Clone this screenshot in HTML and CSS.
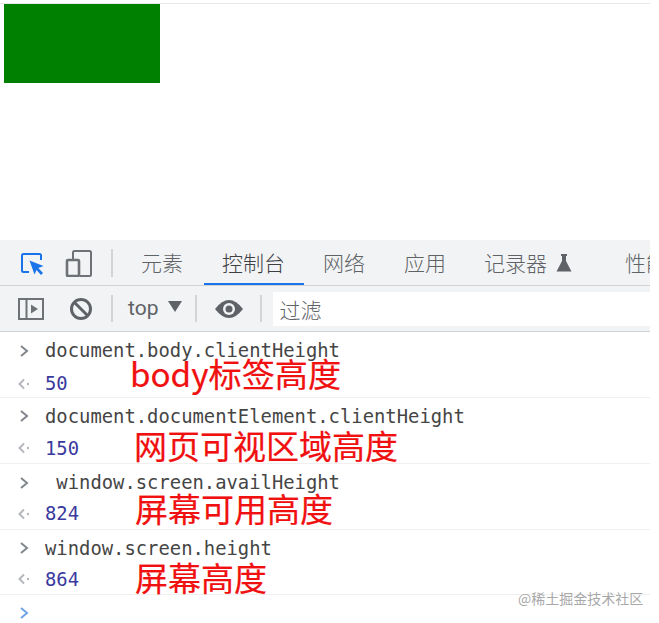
FILE: index.html
```html
<!DOCTYPE html>
<html lang="zh-CN">
<head>
<meta charset="utf-8">
<title>clientHeight</title>
<link rel="stylesheet" href="styles.css">
</head>
<body>
<div class="page">
  <section class="viewport"><div class="green-box"></div></section>
  <section class="devtools">
    <div class="tabbar">
      <svg class="icon icon-inspect" width="26" height="26" viewBox="0 0 26 26"><path d="M10 22H4.500Q3 22 3 20.500V5.500Q3 4 4.500 4H20.500Q22 4 22 5.500V10" fill="none" stroke="#1a73e8" stroke-width="2"/><path d="M10.500 10.500L24.500 16L19.300 18L24 23L22 25L17.500 20L15.500 24.500Z" fill="#1a73e8"/></svg>
      <svg class="icon icon-device" width="28" height="28" viewBox="0 0 28 28"><path d="M8 10V3.500Q8 2 9.500 2H24.500Q26 2 26 3.500V25.500Q26 27 24.500 27H15" fill="none" stroke="#6e7276" stroke-width="2"/><rect x="2" y="11" width="12" height="16" rx="1" fill="none" stroke="#6e7276" stroke-width="2.600"/></svg>
      <span class="sep sep-tall"></span>
      <span class="tab tab-first">元素</span>
      <span class="tab tab-active">控制台</span>
      <span class="tab tab-net">网络</span>
      <span class="tab">应用</span>
      <span class="tab tab-rec">记录器<svg class="flask" width="16" height="20" viewBox="0 0 16 20"><path d="M5 1H11V3H10V8L15.500 18.500H.5L6 8V3H5Z" fill="#5f6368"/></svg></span>
      <span class="tab tab-clip">性能</span>
    </div>
    <div class="filterbar">
      <svg class="icon icon-panel" width="26" height="22" viewBox="0 0 26 22"><rect x="1" y="1" width="24" height="20" fill="none" stroke="#6e7276" stroke-width="2"/><path d="M8.500 1V21" stroke="#6e7276" stroke-width="2"/><path d="M13 6.500L20 11L13 15.500Z" fill="#6e7276"/></svg>
      <svg class="icon icon-clear" width="24" height="24" viewBox="0 0 24 24"><circle cx="12" cy="12" r="9.500" fill="none" stroke="#5f6368" stroke-width="3"/><path d="M5.500 5.500L18.500 18.500" stroke="#5f6368" stroke-width="3"/></svg>
      <span class="sep"></span>
      <span class="context">top</span>
      <span class="caret"></span>
      <span class="sep"></span>
      <svg class="icon icon-eye" width="30" height="20" viewBox="0 0 30 20"><path d="M1 10Q8 1 15 1T29 10Q22 19 15 19T1 10Z" fill="#5f6368"/><circle cx="15" cy="10" r="6" fill="#f1f3f4"/><circle cx="15" cy="10" r="3.500" fill="#5f6368"/></svg>
      <span class="sep"></span>
      <div class="filter">过滤</div>
    </div>
    <div class="console">
      <div class="entry entry-loose">
        <div class="line"><svg class="arrow" width="10" height="12" viewBox="0 0 10 12"><path d="M2 1L8 6L2 11" fill="none" stroke="#80868b" stroke-width="2"/></svg><code class="code">document.body.clientHeight</code></div>
        <div class="line"><svg class="arrow back" width="12" height="12" viewBox="0 0 12 12"><path d="M6 1.500L1.500 6L6 10.500" fill="none" stroke="#b4b8bc" stroke-width="2"/><circle cx="10" cy="6" r="1.200" fill="#b4b8bc"/></svg><code class="code num">50</code></div>
        <span class="note note-body">body标签高度</span>
      </div>
      <div class="entry entry-mid">
        <div class="line"><svg class="arrow" width="10" height="12" viewBox="0 0 10 12"><path d="M2 1L8 6L2 11" fill="none" stroke="#80868b" stroke-width="2"/></svg><code class="code">document.documentElement.clientHeight</code></div>
        <div class="line"><svg class="arrow back" width="12" height="12" viewBox="0 0 12 12"><path d="M6 1.500L1.500 6L6 10.500" fill="none" stroke="#b4b8bc" stroke-width="2"/><circle cx="10" cy="6" r="1.200" fill="#b4b8bc"/></svg><code class="code num">150</code></div>
        <span class="note note-view">网页可视区域高度</span>
      </div>
      <div class="entry entry-tight">
        <div class="line"><svg class="arrow" width="10" height="12" viewBox="0 0 10 12"><path d="M2 1L8 6L2 11" fill="none" stroke="#80868b" stroke-width="2"/></svg><code class="code"> window.screen.availHeight</code></div>
        <div class="line"><svg class="arrow back" width="12" height="12" viewBox="0 0 12 12"><path d="M6 1.500L1.500 6L6 10.500" fill="none" stroke="#b4b8bc" stroke-width="2"/><circle cx="10" cy="6" r="1.200" fill="#b4b8bc"/></svg><code class="code num">824</code></div>
        <span class="note note-avail">屏幕可用高度</span>
      </div>
      <div class="entry entry-tight">
        <div class="line"><svg class="arrow" width="10" height="12" viewBox="0 0 10 12"><path d="M2 1L8 6L2 11" fill="none" stroke="#80868b" stroke-width="2"/></svg><code class="code">window.screen.height</code></div>
        <div class="line"><svg class="arrow back" width="12" height="12" viewBox="0 0 12 12"><path d="M6 1.500L1.500 6L6 10.500" fill="none" stroke="#b4b8bc" stroke-width="2"/><circle cx="10" cy="6" r="1.200" fill="#b4b8bc"/></svg><code class="code num">864</code></div>
        <span class="note note-screen">屏幕高度</span>
      </div>
      <div class="line prompt"><svg class="arrow" width="10" height="14" viewBox="0 0 10 14"><path d="M2 2L8 7L2 12" fill="none" stroke="#6ea3e8" stroke-width="2"/></svg></div>
      <span class="watermark">@稀土掘金技术社区</span>
    </div>
  </section>
</div>
</body>
</html>
```
FILE: styles.css
```css
* { box-sizing: border-box; }
html, body { margin: 0; background: #fff; }
body { font-family: "Noto Sans CJK SC", "Noto Sans", sans-serif; overflow: hidden; }
.page { width: 650px; height: 623px; }

.viewport { margin-top: 3px; height: 237px; border-top: 1px solid #e8e8e8; }
.green-box { width: 156px; height: 79px; margin-left: 4px; background: #008000; }

.devtools { color: #5f6368; }
.tabbar {
  height: 46px;
  background: #f1f3f4;
  border-bottom: 1px solid #d0d3d6;
  display: flex;
  align-items: center;
  overflow: hidden;
}
.icon { flex: none; display: block; }
.icon-inspect { margin-left: 19px; margin-top: 1px; }
.icon-device { margin-left: 20px; }
.sep { flex: none; width: 2px; height: 26px; background: #d2d4d7; }
.sep-tall { margin-left: 18px; height: 28px; }
.tab {
  flex: none;
  height: 45px;
  line-height: 45px;
  font-size: 21px;
  font-weight: 300;
  color: #5f6368;
  padding: 0 19px;
  white-space: nowrap;
}
.tab-first { margin-left: 10px; padding: 0 21px 0 18px; }
.tab-active {
  color: #3c4043;
  border-bottom: 2px solid #1a73e8;
  padding: 0 19px 0 18px;
  width: 100px;
}
.tab-net { padding-right: 20px; }
.tab-rec { display: flex; align-items: center; padding-left: 19px; padding-right: 0; }
.flask { margin-left: 9px; }
.tab-clip { padding-left: 53px; padding-right: 0; width: 100px; overflow: hidden; }

.filterbar {
  height: 46px;
  background: #f1f3f4;
  border-bottom: 1px solid #d0d3d6;
  display: flex;
  align-items: center;
}
.icon-panel { margin-left: 18px; }
.icon-clear { margin-left: 25px; }
.filterbar .sep { height: 27px; }
.icon-clear + .sep { margin-left: 18px; }
.context { margin-left: 15px; font-family: "Roboto", sans-serif; font-size: 21px; color: #5f6368; line-height: 1; }
.caret {
  width: 0; height: 0;
  margin-left: 10px; margin-right: 13px; margin-top: -5px;
  border-left: 7px solid transparent;
  border-right: 7px solid transparent;
  border-top: 11px solid #5f6368;
}
.icon-eye { margin-left: 17px; }
.icon-eye + .sep { margin-left: 16px; }
.filter {
  margin-left: 11px;
  flex: 1;
  height: 34px;
  background: #fff;
  font-size: 21px;
  font-weight: 300;
  line-height: 35px;
  padding-left: 6px;
  color: #5f6368;
}

.console { position: relative; }
.entry { position: relative; border-bottom: 1px solid #f0f0f0; height: 66px; padding-top: 2px; }
.entry-tight { height: 65.500px; padding-top: 3px; }
.line { height: 33px; display: flex; align-items: center; padding-left: 19px; }
.entry-mid .line { height: 32px; }
.entry-tight .line { height: 31px; }
.arrow { flex: none; display: block; }
.back { margin-left: -1px; }
.code {
  margin-left: 16px;
  font-family: "DejaVu Sans Mono", monospace;
  font-size: 18.850px;
  color: #454545;
  white-space: pre;
  line-height: 31px;
}
.back + .code { margin-left: 15px; }
.num { color: #3a3a9e; }
.note {
  position: absolute;
  color: #f01010;
  font-size: 33px;
  line-height: 1;
  white-space: nowrap;
  font-family: "Noto Sans CJK SC", sans-serif;
  -webkit-text-stroke: 0.2px #f01010;
}
.note-body { left: 130px; top: 24px; font-size: 33.200px; }
.note-view { left: 134px; top: 31px; }
.note-avail { left: 135px; top: 28px; }
.note-screen { left: 135px; top: 31px; }
.prompt { height: 36px; }
.watermark {
  position: absolute;
  left: 518px;
  top: 258px;
  font-size: 14px;
  line-height: 16px;
  color: #a8a8a8;
  white-space: nowrap;
}
```
